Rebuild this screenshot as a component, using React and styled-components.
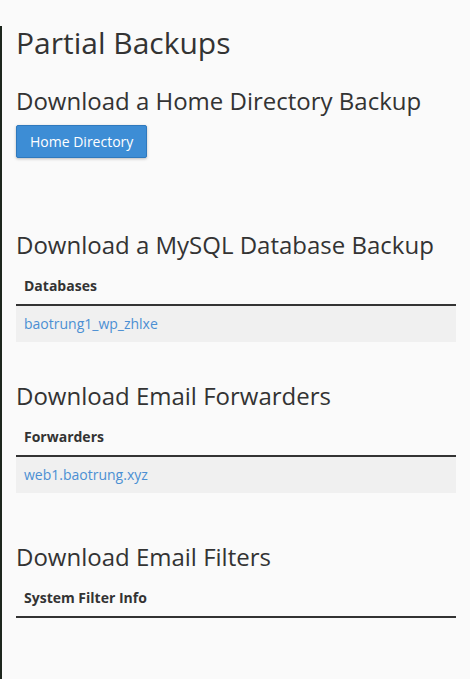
import React from "react";
import styled, { createGlobalStyle } from "styled-components";

const GlobalStyle = createGlobalStyle`
  html, body {
    margin: 0;
    padding: 0;
    background-color: #fafafa;
  }
  body {
    font-family: "Open Sans", "Liberation Sans", sans-serif;
    color: #333;
  }
`;

const Page = styled.div`
  min-height: 679px;
  box-sizing: border-box;
  border-left: 2px solid #1d261d;
  padding: 0 14px 0 14px;
  background-color: #fafafa;
`;

const PageTitle = styled.h2`
  margin: 26px 0 0;
  font-size: 30px;
  line-height: 33px;
  font-weight: 400;
`;

const SectionTitle = styled.h3`
  margin: ${(p) => p.$top}px 0 0;
  font-size: 24px;
  line-height: 26px;
  font-weight: 400;
`;

const PrimaryBtn = styled.button`
  margin-top: 11px;
  height: 33px;
  padding: 0 13px;
  border: 1px solid #2f79bd;
  border-radius: 2px;
  background-color: #3d8dd5;
  color: #fff;
  font-family: "Open Sans", "Liberation Sans", sans-serif;
  font-size: 14px;
  box-shadow: 0 1px 3px rgba(0, 0, 0, 0.25);
  cursor: pointer;
`;

const Table = styled.table`
  width: 100%;
  margin-top: 10px;
  border-collapse: collapse;
  font-size: 14px;
  line-height: 20px;
`;

const Th = styled.th`
  text-align: left;
  font-weight: 700;
  padding: 8px;
  border-bottom: 2px solid #333;
`;

const Td = styled.td`
  background-color: #f0f0f0;
  padding: 8px;
`;

const Link = styled.a`
  color: #4b8fd3;
  text-decoration: none;
`;

function BackupTable({ heading, rows }) {
  return (
    <Table>
      <thead>
        <tr>
          <Th>{heading}</Th>
        </tr>
      </thead>
      <tbody>
        {rows.map((r) => (
          <tr key={r}>
            <Td>
              <Link href="#">{r}</Link>
            </Td>
          </tr>
        ))}
      </tbody>
    </Table>
  );
}

export default function App() {
  return (
    <>
      <GlobalStyle />
      <Page>
        <PageTitle>Partial Backups</PageTitle>
        <SectionTitle $top={29}>Download a Home Directory Backup</SectionTitle>
        <PrimaryBtn>Home Directory</PrimaryBtn>

        <SectionTitle $top={74}>Download a MySQL Database Backup</SectionTitle>
        <BackupTable heading="Databases" rows={["baotrung1_wp_zhlxe"]} />

        <SectionTitle $top={41}>Download Email Forwarders</SectionTitle>
        <BackupTable heading="Forwarders" rows={["web1.baotrung.xyz"]} />

        <SectionTitle $top={51}>Download Email Filters</SectionTitle>
        <BackupTable heading="System Filter Info" rows={[]} />
      </Page>
    </>
  );
}
